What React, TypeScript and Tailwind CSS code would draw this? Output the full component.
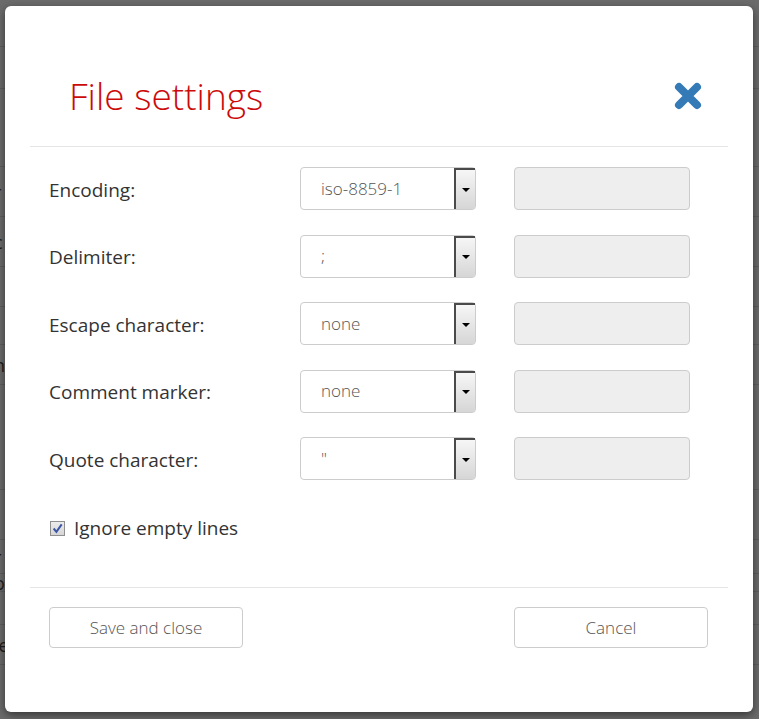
import React from 'react';

const ROWS = [
  { label: 'Encoding:', value: 'iso-8859-1' },
  { label: 'Delimiter:', value: ';' },
  { label: 'Escape character:', value: 'none' },
  { label: 'Comment marker:', value: 'none' },
  { label: 'Quote character:', value: '"' },
];

// rows of the page that sits behind the dimmed overlay
const BACKDROP = [
  { h: 47, text: '' },
  { h: 42, text: '' },
  { h: 78, text: '' },
  { h: 50, text: 'r' },
  { h: 50, text: 'c' },
  { h: 40, text: '' },
  { h: 38, text: '' },
  { h: 40, text: 'n' },
  { h: 105, text: '' },
  { h: 50, text: '' },
  { h: 34, text: 'r' },
  { h: 18, text: 'o' },
  { h: 33, text: '' },
  { h: 40, text: 'le' },
];

const SelectBox = ({ value }: { value: string }) => (
  <div className="flex h-[43px] w-[176px] items-stretch rounded-[4px] border border-[#cccccc] bg-white">
    <div className="flex flex-1 items-center pl-[20px] text-[17px] font-light text-[#555555]">{value}</div>
    <div className="flex w-[21px] items-center justify-center border-l-2 border-t-2 border-[#4a4a4a] bg-gradient-to-b from-[#f6f6f6] to-[#d6d6d6]">
      <div className="h-0 w-0 border-x-[4px] border-t-[4px] border-x-transparent border-t-black" />
    </div>
  </div>
);

const CloseIcon = () => (
  <svg width="28" height="28" viewBox="0 0 28 28">
    <path d="M5 5 L23 23 M23 5 L5 23" stroke="#337ab7" strokeWidth="8" strokeLinecap="round" />
  </svg>
);

const App = () => {
  return (
    <div className="relative h-[719px] w-[759px] overflow-hidden bg-[#6b6b6b] font-['Open_Sans',sans-serif]">
      {/* Page behind overlay */}
      <div className="flex flex-col">
        {BACKDROP.map((row, i) => (
          <div
            key={i}
            style={{ height: row.h }}
            className="flex items-center border-b border-[#5e5e5e] text-[18px] leading-none text-[#1d1d1d]"
          >
            <span className="-ml-[6px]">{row.text}</span>
          </div>
        ))}
      </div>

      {/* Modal */}
      <div className="absolute left-[5px] top-[6px] flex h-[706px] w-[748px] flex-col rounded-[6px] bg-white px-[25px] shadow-[0_3px_9px_rgba(0,0,0,0.5)]">
        <div className="flex items-center justify-between border-b border-[#e5e5e5] pb-[29px] pl-[39px] pr-[26px] pt-[69px]">
          <h1 className="text-[37px] font-light leading-[42px] text-[#cc0a0a]">File settings</h1>
          <CloseIcon />
        </div>

        <div className="flex flex-col gap-y-[24.5px] pl-[19px] pt-[20px]">
          {ROWS.map(row => (
            <div key={row.label} className="flex h-[43px] items-center">
              <label className="w-[251px] pt-[3px] text-[19px] text-[#333333]">{row.label}</label>
              <SelectBox value={row.value} />
              <div className="ml-[38px] h-[43px] w-[176px] rounded-[4px] border border-[#cccccc] bg-[#eeeeee]" />
            </div>
          ))}
        </div>

        <div className="mt-[36px] flex h-[24px] items-center pl-[20px]">
          <div className="flex h-[15px] w-[15px] items-center justify-center border border-[#8f8f8f] bg-gradient-to-b from-[#ececec] to-[#d6d6d6]">
            <svg width="11" height="11" viewBox="0 0 10 10">
              <path d="M1.5 5 L4 8 L8.8 1.2" stroke="#3c56a5" strokeWidth="1.8" fill="none" />
            </svg>
          </div>
          <span className="ml-[9px] text-[19px] text-[#333333]">Ignore empty lines</span>
        </div>

        <div className="mt-[47px] flex justify-between border-t border-[#e5e5e5] pl-[19px] pr-[20px] pt-[19px]">
          <button className="h-[41px] w-[194px] rounded-[4px] border border-[#cccccc] bg-white text-[17px] font-light text-[#555555]">
            Save and close
          </button>
          <button className="h-[41px] w-[194px] rounded-[4px] border border-[#cccccc] bg-white text-[17px] font-light text-[#555555]">
            Cancel
          </button>
        </div>
      </div>
    </div>
  );
};

export default App;
